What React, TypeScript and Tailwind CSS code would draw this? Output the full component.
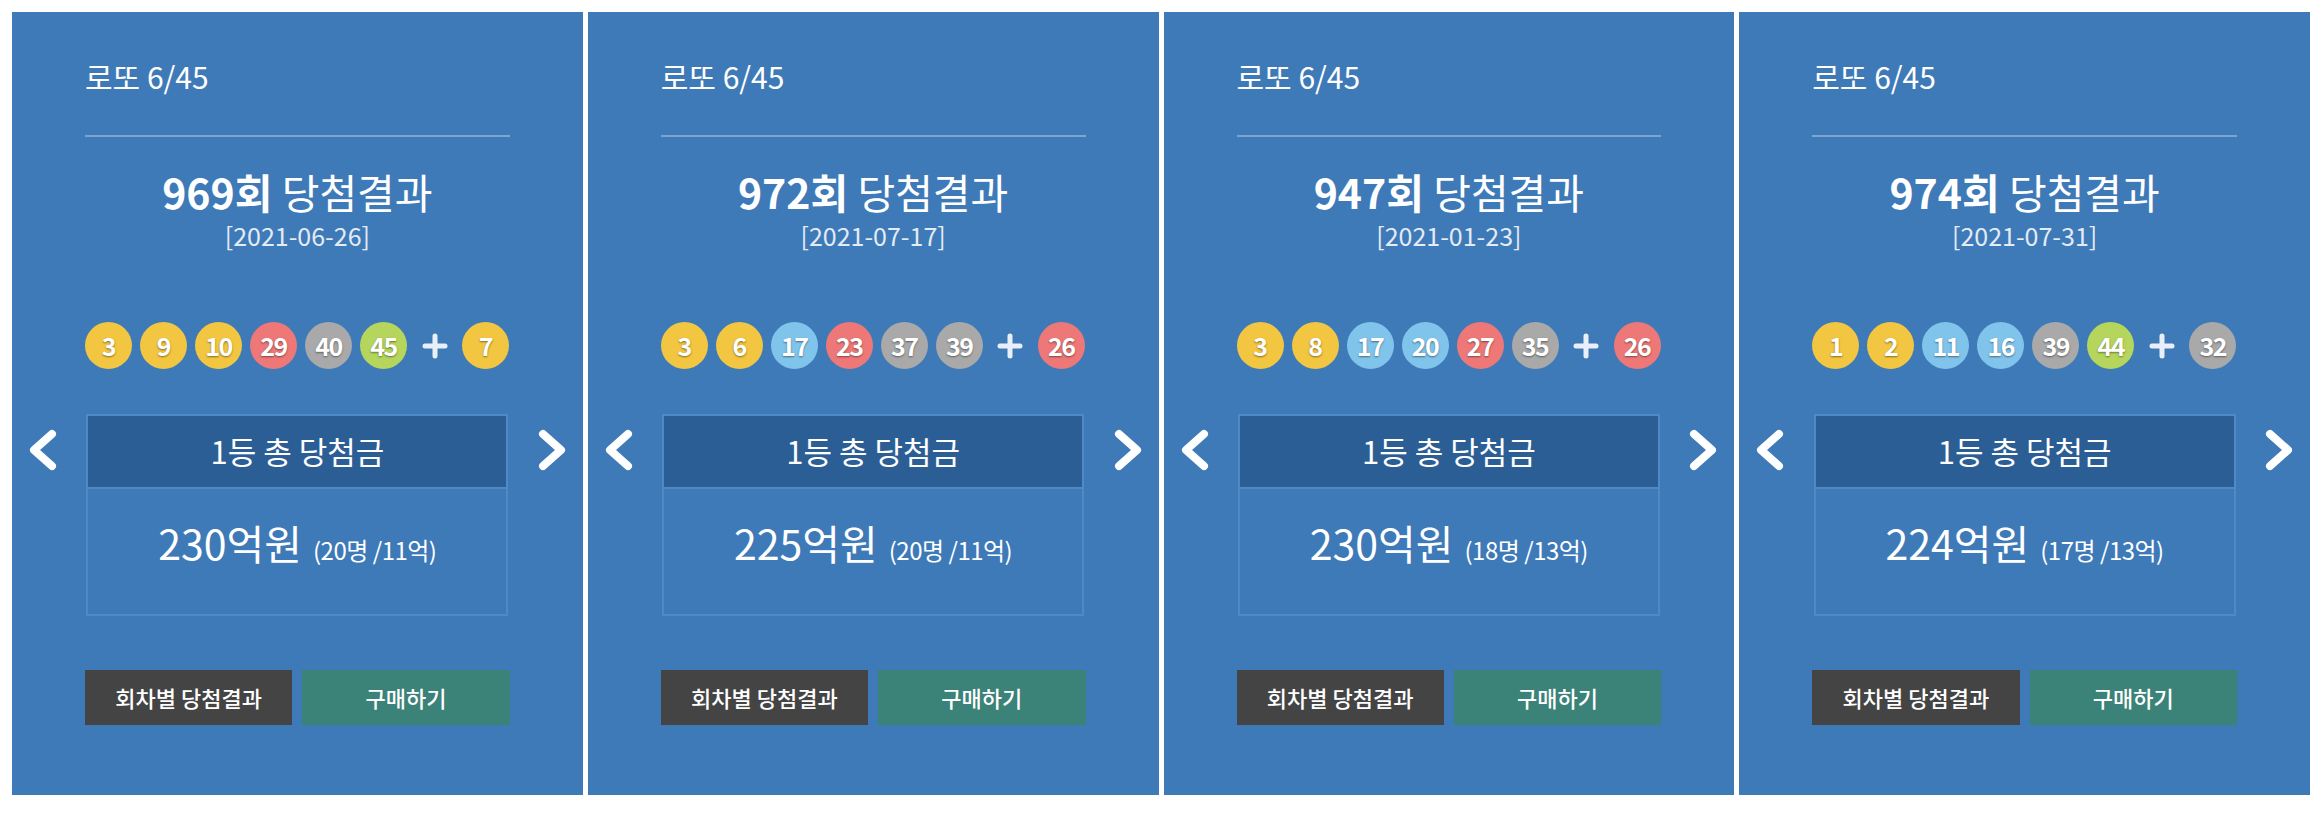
import React from "react";

type Draw = {
  round: number;
  date: string;
  numbers: number[];
  bonus: number;
  total: string;
  winners: string;
  perWinner: string;
};

const draws: Draw[] = [
  { round: 969, date: "2021-06-26", numbers: [3, 9, 10, 29, 40, 45], bonus: 7, total: "230", winners: "20", perWinner: "11" },
  { round: 972, date: "2021-07-17", numbers: [3, 6, 17, 23, 37, 39], bonus: 26, total: "225", winners: "20", perWinner: "11" },
  { round: 947, date: "2021-01-23", numbers: [3, 8, 17, 20, 27, 35], bonus: 26, total: "230", winners: "18", perWinner: "13" },
  { round: 974, date: "2021-07-31", numbers: [1, 2, 11, 16, 39, 44], bonus: 32, total: "224", winners: "17", perWinner: "13" },
];

function ballColor(n: number) {
  if (n <= 10) return "bg-[#f2c640]";
  if (n <= 20) return "bg-[#80c4ec]";
  if (n <= 30) return "bg-[#ed7877]";
  if (n <= 40) return "bg-[#a9a9a9]";
  return "bg-[#b6d55c]";
}

function Ball({ n }: { n: number }) {
  return (
    <span
      className={`flex h-[47px] w-[47px] shrink-0 items-center justify-center rounded-full text-[25px] font-bold tracking-[-1.5px] text-white [text-shadow:0_1px_2px_rgba(0,0,0,0.45)] ${ballColor(n)}`}
    >
      {n}
    </span>
  );
}

function Chevron({ dir }: { dir: "left" | "right" }) {
  return (
    <svg
      width="28"
      height="42"
      viewBox="0 0 28 42"
      className="mt-[15px] shrink-0"
      fill="none"
      stroke="white"
      strokeWidth="8"
      strokeLinecap="round"
      strokeLinejoin="round"
    >
      {dir === "left" ? (
        <polyline points="23,5 5,21 23,37" />
      ) : (
        <polyline points="5,5 23,21 5,37" />
      )}
    </svg>
  );
}

function LottoPanel({ draw }: { draw: Draw }) {
  return (
    <div className="flex h-[783px] flex-1 flex-col bg-[#3e7ab8] px-[17px] text-white">
      <div className="mx-[56px] flex flex-col">
        <p className="pt-[44px] text-[30px] leading-[40px]">로또 6/45</p>
        <div className="mt-[39px] h-[2px] bg-[#7ea4cf]" />

        <h2 className="mt-[29px] text-center text-[41px] leading-[50px]">
          <span className="font-bold">{draw.round}회</span> 당첨결과
        </h2>
        <p className="mt-[4px] text-center text-[25px] leading-[30px] text-[#e3ebf5]">
          [{draw.date}]
        </p>

        <div className="mt-[72px] flex items-center gap-[8px]">
          {draw.numbers.map((n) => (
            <Ball key={n} n={n} />
          ))}
          <span className="flex w-[39px] justify-center">
            <svg width="26" height="26" viewBox="0 0 26 26" stroke="#e9eff8" strokeWidth="5" strokeLinecap="round">
              <line x1="13" y1="3" x2="13" y2="23" />
              <line x1="3" y1="13" x2="23" y2="13" />
            </svg>
          </span>
          <Ball n={draw.bonus} />
        </div>
      </div>

      <div className="mt-[45px] flex items-start justify-between">
        <Chevron dir="left" />
        <div className="w-[422px] border-2 border-[#5089c6]">
          <div className="flex h-[73px] items-center justify-center border-b-2 border-[#5089c6] bg-[#2c5e96] text-[31px]">
            1등 총 당첨금
          </div>
          <div className="h-[125px] pt-[28px] text-center leading-[50px]">
            <span className="text-[41px]">{draw.total}억원</span>
            <span className="ml-[11px] text-[24px] tracking-[-0.5px]">
              ({draw.winners}명 /{draw.perWinner}억)
            </span>
          </div>
        </div>
        <Chevron dir="right" />
      </div>

      <div className="mx-[56px] mt-[54px] grid grid-cols-2 gap-[10px]">
        <button className="h-[55px] bg-[#444444] text-[22px] font-medium text-white">
          회차별 당첨결과
        </button>
        <button className="h-[55px] bg-[#3b8278] text-[22px] font-medium text-white">
          구매하기
        </button>
      </div>
    </div>
  );
}

export default function App() {
  return (
    <div className="flex h-[814px] w-full gap-[5px] bg-white p-[12px] font-['Noto_Sans_CJK_KR','Noto_Sans',sans-serif]">
      {draws.map((d) => (
        <LottoPanel key={d.round} draw={d} />
      ))}
    </div>
  );
}
